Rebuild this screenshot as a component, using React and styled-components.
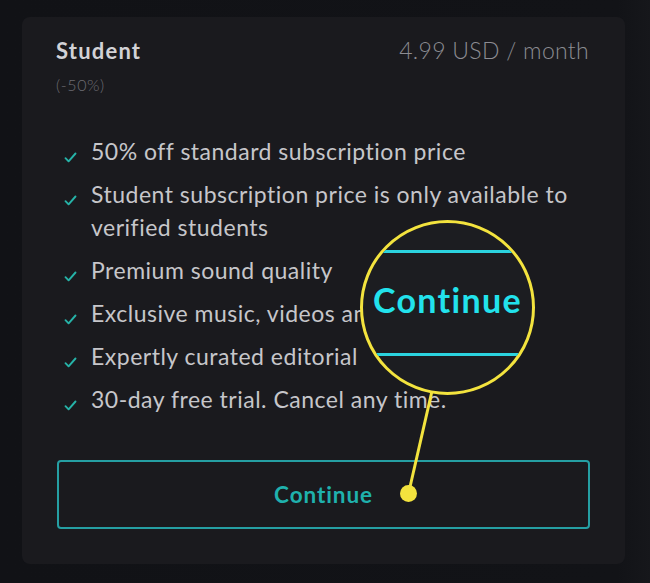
import React from "react";
import styled, { createGlobalStyle } from "styled-components";

const GlobalStyle = createGlobalStyle`
  html, body {
    margin: 0;
    padding: 0;
    background: #111216;
  }
  body {
    font-family: "Lato", "Open Sans", sans-serif;
    -webkit-font-smoothing: antialiased;
  }
`;

const features = [
  "50% off standard subscription price",
  "Student subscription price is only available to verified students",
  "Premium sound quality",
  "Exclusive music, videos and more",
  "Expertly curated editorial",
  "30-day free trial. Cancel any time.",
];

const CheckIcon = () => (
  <svg width="13" height="11" viewBox="0 0 13 11">
    <path d="M1.5 6.2 L4.6 9.3 L11.5 1.5" fill="none" stroke="#26b3a8" strokeWidth="1.9" strokeLinecap="round" strokeLinejoin="round" />
  </svg>
);

const App = () => {
  return (
    <>
      <GlobalStyle />
      <Page>
        <Card>
          <Header>
            <PlanName>Student</PlanName>
            <Price>4.99 USD / month</Price>
          </Header>
          <Discount>(-50%)</Discount>

          <FeatureList>
            {features.map((text) => (
              <Feature key={text}>
                <CheckWrap>
                  <CheckIcon />
                </CheckWrap>
                <FeatureText>{text}</FeatureText>
              </Feature>
            ))}
          </FeatureList>

          <ContinueButton>Continue</ContinueButton>

          {/* callout: pointer line + dot */}
          <Pointer width="603" height="547" viewBox="0 0 603 547">
            <line x1="386.5" y1="476.5" x2="410" y2="374" stroke="#f3e33e" strokeWidth="3" />
            <circle cx="386.5" cy="476.5" r="8.5" fill="#f3e33e" />
          </Pointer>

          <Magnifier>
            <ZoomedButton>Continue</ZoomedButton>
          </Magnifier>
        </Card>
      </Page>
    </>
  );
};

const Page = styled.div`
  width: 650px;
  height: 583px;
  padding: 17px 25px 19px 22px;
  box-sizing: border-box;
  background: linear-gradient(90deg, #111216 0%, #121317 95%, #16171b 100%);
`;

const Card = styled.div`
  position: relative;
  height: 100%;
  background: #1a1a1e;
  border-radius: 8px;
  padding: 19px 36px 35px 34px;
  box-sizing: border-box;
  display: flex;
  flex-direction: column;
`;

const Header = styled.div`
  display: flex;
  justify-content: space-between;
  align-items: baseline;
`;

const PlanName = styled.div`
  font-size: 22px;
  font-weight: 700;
  letter-spacing: 1.2px;
  color: #d2d2d6;
  line-height: 28px;
`;

const Price = styled.div`
  font-size: 23px;
  font-weight: 300;
  letter-spacing: 0.3px;
  color: #8c8c92;
  line-height: 28px;
`;

const Discount = styled.div`
  margin-top: 10px;
  font-size: 16px;
  font-weight: 300;
  letter-spacing: 0.6px;
  color: #6c6c72;
  line-height: 20px;
`;

const FeatureList = styled.ul`
  list-style: none;
  margin: 40px 0 0;
  padding: 0;
  display: flex;
  flex-direction: column;
  gap: 10px;
`;

const Feature = styled.li`
  display: flex;
  align-items: flex-start;
`;

const CheckWrap = styled.span`
  flex: none;
  width: 35px;
  padding-top: 17px;
  padding-left: 8px;
  box-sizing: border-box;
  display: flex;
`;

const FeatureText = styled.span`
  font-size: 23px;
  line-height: 33px;
  letter-spacing: 0.5px;
  color: #c6c6ca;
  font-weight: 400;
  max-width: 490px;
`;

const ContinueButton = styled.button`
  margin-top: auto;
  height: 69px;
  width: 100%;
  margin-left: 1px;
  background: transparent;
  border: 2px solid #259fa3;
  border-radius: 4px;
  color: #1fb1ad;
  font-family: "Lato", sans-serif;
  font-size: 22.5px;
  font-weight: 700;
  letter-spacing: 0.9px;
  cursor: pointer;
`;

const Pointer = styled.svg`
  position: absolute;
  left: 0;
  top: 0;
  pointer-events: none;
`;

const Magnifier = styled.div`
  position: absolute;
  left: 338px;
  top: 203px;
  width: 175px;
  height: 175px;
  box-sizing: border-box;
  border: 3px solid #f3e33e;
  border-radius: 50%;
  background: #1c1d21;
  overflow: hidden;
`;

const ZoomedButton = styled.div`
  position: absolute;
  left: -20px;
  right: -20px;
  top: 27px;
  height: 106px;
  padding-bottom: 8px;
  box-sizing: border-box;
  border-top: 3px solid #2bd3df;
  border-bottom: 3px solid #2bd3df;
  display: flex;
  align-items: center;
  justify-content: center;
  color: #22e2ec;
  font-size: 34px;
  font-weight: 700;
  letter-spacing: 1.3px;
`;

export default App;
